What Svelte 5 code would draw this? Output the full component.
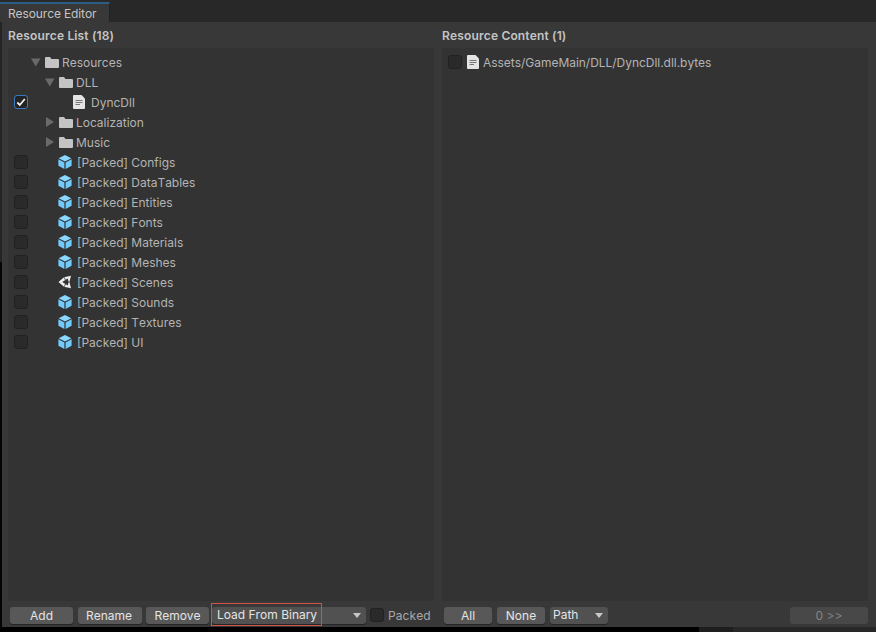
<script>
	const tree = [
		{ name: 'Resources', arrowAt: 3, arrow: 'open', icon: 'folder' },
		{ name: 'DLL', arrowAt: 17, arrow: 'open', icon: 'folder' },
		{ name: 'DyncDll', icon: 'file', check: 'on' },
		{ name: 'Localization', arrowAt: 17, arrow: 'closed', icon: 'folder' },
		{ name: 'Music', arrowAt: 17, arrow: 'closed', icon: 'folder' },
		{ name: '[Packed] Configs', icon: 'cube', check: 'off' },
		{ name: '[Packed] DataTables', icon: 'cube', check: 'off' },
		{ name: '[Packed] Entities', icon: 'cube', check: 'off' },
		{ name: '[Packed] Fonts', icon: 'cube', check: 'off' },
		{ name: '[Packed] Materials', icon: 'cube', check: 'off' },
		{ name: '[Packed] Meshes', icon: 'cube', check: 'off' },
		{ name: '[Packed] Scenes', icon: 'unity', check: 'off' },
		{ name: '[Packed] Sounds', icon: 'cube', check: 'off' },
		{ name: '[Packed] Textures', icon: 'cube', check: 'off' },
		{ name: '[Packed] UI', icon: 'cube', check: 'off' }
	];
</script>

{#snippet fileIcon()}
	<svg class="icon-file" viewBox="0 0 12 14" width="12" height="14">
		<path d="M1 0h7.500L12 3.500V13a1 1 0 0 1-1 1H1a1 1 0 0 1-1-1V1a1 1 0 0 1 1-1z" fill="#e4e4e4" />
		<path d="M2.500 5.500h7M2.500 7.500h7M2.500 9.500h4.500" stroke="#777" stroke-width="1" fill="none" />
	</svg>
{/snippet}

<div class="window">
	<div class="tabbar">
		<div class="tab">Resource Editor</div>
	</div>
	<div class="main">
		<div class="edge"></div>
		<div class="panes">
			<section class="pane">
				<h2>Resource List (18)</h2>
				<div class="box">
					{#each tree as row}
						<div class="row">
							<span class="check-slot">
								{#if row.check === 'on'}
									<span class="check on">
										<svg viewBox="0 0 12 12" width="12" height="12">
											<path d="M2.300 6.500l2.500 2.500 5-6" stroke="#f0f0f0" stroke-width="1.800" fill="none" />
										</svg>
									</span>
								{:else if row.check === 'off'}
									<span class="check"></span>
								{/if}
							</span>
							{#if row.arrow}
								<svg class="arrow" style="margin-left:{row.arrowAt}px" viewBox="0 0 10 10" width="10" height="10">
									{#if row.arrow === 'open'}
										<path d="M0 1.500h9.500l-4.750 8z" fill="#6a6a6a" />
									{:else}
										<path d="M1 0l8 5-8 5z" fill="#6a6a6a" />
									{/if}
								</svg>
								<svg class="icon-folder" viewBox="0 0 14 11" width="14" height="11">
									<path d="M0 1a1 1 0 0 1 1-1h4l1.500 2H13a1 1 0 0 1 1 1v7a1 1 0 0 1-1 1H1a1 1 0 0 1-1-1z" fill="#c4c4c4" />
								</svg>
								<span class="label folder-label">{row.name}</span>
							{:else if row.icon === 'file'}
								<span class="file-indent">{@render fileIcon()}</span>
								<span class="label file-label">{row.name}</span>
							{:else}
								{#if row.icon === 'cube'}
									<svg class="icon-asset" viewBox="0 0 14 14" width="14" height="14">
										<path d="M7 0l6.300 3.300L7 6.600.700 3.300z" fill="#8ad8ff" />
										<path d="M.4 4.200l6 3.200V14L.4 10.800z" fill="#72cbfa" />
										<path d="M13.600 4.200l-6 3.200V14l6-3.200z" fill="#72cbfa" />
									</svg>
								{:else}
									<svg class="icon-asset" viewBox="0 0 14 14" width="14" height="14">
										<path fill-rule="evenodd" d="M13 .8L6 2.200.5 7 6 11.800l7 1.400-1.600-6.200zM4.200 7l5.600-3.400.8 3.400-.8 3.400z" fill="#eee" />
										<path d="M6 2.200l1.500 2.800M6 11.800L7.500 9M11.400 7H10" stroke="#333" stroke-width="0.800" fill="none" />
									</svg>
								{/if}
								<span class="label asset-label">{row.name}</span>
							{/if}
						</div>
					{/each}
				</div>
				<div class="actions">
					<button class="btn add">Add</button>
					<button class="btn rename">Rename</button>
					<button class="btn remove">Remove</button>
					<div class="select load">
						<span class="outline">Load From Binary</span>
						<i class="caret"></i>
					</div>
					<span class="check packed"></span>
					<span class="packed-label">Packed</span>
				</div>
			</section>
			<section class="pane">
				<h2>Resource Content (1)</h2>
				<div class="box">
					<div class="row content-row">
						<span class="check"></span>
						{@render fileIcon()}
						<span class="label">Assets/GameMain/DLL/DyncDll.dll.bytes</span>
					</div>
				</div>
				<div class="actions">
					<button class="btn all">All</button>
					<button class="btn none">None</button>
					<div class="select path">
						<span>Path</span>
						<i class="caret"></i>
					</div>
					<button class="btn next" disabled>0 &gt;&gt;</button>
				</div>
			</section>
		</div>
	</div>
	<div class="under">
		<div class="under-a"></div>
		<div class="under-b"></div>
	</div>
</div>

<style>
	:global(body) {
		background: #000;
	}
	.window {
		width: 876px;
		height: 632px;
		display: flex;
		flex-direction: column;
		overflow: hidden;
		font-family: Inter, 'Liberation Sans', sans-serif;
		font-size: 12px;
		font-kerning: none;
		color: #bdbdbd;
		background: #383838;
	}
	.tabbar {
		height: 22px;
		flex: none;
		background: #282828;
		display: flex;
		align-items: flex-end;
	}
	.tab {
		width: 110px;
		height: 20px;
		padding-left: 8px;
		box-sizing: border-box;
		line-height: 19px;
		letter-spacing: -0.12px;
		background: #383838;
		border-top: 2px solid #2c5d87;
		border-right: 1px solid #232323;
		color: #c4c4c4;
	}
	.main {
		flex: 1;
		display: flex;
		min-height: 0;
	}
	.edge {
		width: 2px;
		flex: none;
		background: linear-gradient(#242424 240px, #050505 240px);
	}
	.panes {
		flex: 1;
		display: grid;
		grid-template-columns: 426px 426px;
		column-gap: 8px;
		padding: 0 8px 0 6px;
		min-height: 0;
	}
	.pane {
		display: flex;
		flex-direction: column;
		min-height: 0;
	}
	h2 {
		margin: 0;
		height: 26px;
		line-height: 27px;
		font-size: 12px;
		font-weight: 600;
		letter-spacing: 0.15px;
		color: #c4c4c4;
	}
	.box {
		flex: 1;
		background: #333;
		padding-top: 4px;
	}
	.row {
		height: 20px;
		display: flex;
		align-items: center;
	}
	.check-slot {
		width: 14px;
		height: 14px;
		flex: none;
		margin-left: 6px;
		display: flex;
	}
	.check {
		width: 14px;
		height: 14px;
		flex: none;
		box-sizing: border-box;
		display: flex;
		align-items: center;
		justify-content: center;
		background: #2a2a2a;
		border: 1px solid #212121;
		border-radius: 3px;
	}
	.check.on {
		background: #232323;
		border-color: #3a7ac0;
	}
	.arrow {
		flex: none;
	}
	.icon-folder {
		flex: none;
		margin-left: 4px;
	}
	.folder-label {
		margin-left: 3px;
	}
	.file-indent {
		margin-left: 45px;
		display: flex;
	}
	.file-label {
		margin-left: 6px;
	}
	.icon-asset {
		flex: none;
		margin-left: 30px;
	}
	.asset-label {
		margin-left: 5px;
	}
	.label {
		color: #b4b4b4;
		white-space: nowrap;
	}
	.content-row {
		padding-left: 6px;
		gap: 5px;
	}
	.content-row .label {
		margin-left: -1px;
		letter-spacing: -0.03px;
	}
	.actions {
		height: 26px;
		flex: none;
		display: flex;
		align-items: center;
		padding-top: 3px;
		box-sizing: border-box;
		padding-left: 2px;
	}
	.btn {
		height: 17px;
		padding: 0;
		margin: 0 4px 0 0;
		border: none;
		border-radius: 3px;
		background: #585858;
		box-shadow: 0 1px 0 #242424;
		color: #e4e4e4;
		font: 12px Inter, 'Liberation Sans', sans-serif;
		font-kerning: none;
	}
	.add {
		width: 63px;
		margin-right: 5px;
	}
	.rename {
		width: 64px;
		padding-right: 2px;
	}
	.remove {
		width: 63px;
		margin-right: 3px;
	}
	.select {
		position: relative;
		height: 17px;
		box-sizing: border-box;
		border-radius: 3px;
		background: #515151;
		box-shadow: 0 1px 0 #242424;
		color: #e4e4e4;
		padding-left: 3px;
		line-height: 16px;
		flex: none;
	}
	.load {
		width: 154px;
		margin-right: 4px;
		padding-left: 0;
	}
	.outline {
		position: absolute;
		left: -1px;
		top: -4px;
		width: 111px;
		height: 23px;
		box-sizing: border-box;
		padding-left: 5px;
		line-height: 21px;
		border: 1px solid #d0524a;
	}
	.caret {
		position: absolute;
		right: 5px;
		top: 6px;
		width: 0;
		height: 0;
		border-left: 4px solid transparent;
		border-right: 4px solid transparent;
		border-top: 5px solid #c8c8c8;
	}
	.packed {
		margin-right: 4px;
		margin-bottom: 1px;
	}
	.packed-label {
		color: #a8a8a8;
		letter-spacing: 0.1px;
	}
	.all,
	.none {
		width: 48px;
		margin-right: 5px;
	}
	.path {
		width: 58px;
	}
	.next {
		margin: 0 0 0 auto;
		width: 78px;
		background: #484848;
		color: #858585;
		box-shadow: none;
	}
	.under {
		height: 5px;
		flex: none;
		display: flex;
		background: #282828;
	}
	.under-a {
		width: 699px;
		background: #000;
	}
	.under-b {
		width: 34px;
		background: #1e1e1e;
	}
</style>
